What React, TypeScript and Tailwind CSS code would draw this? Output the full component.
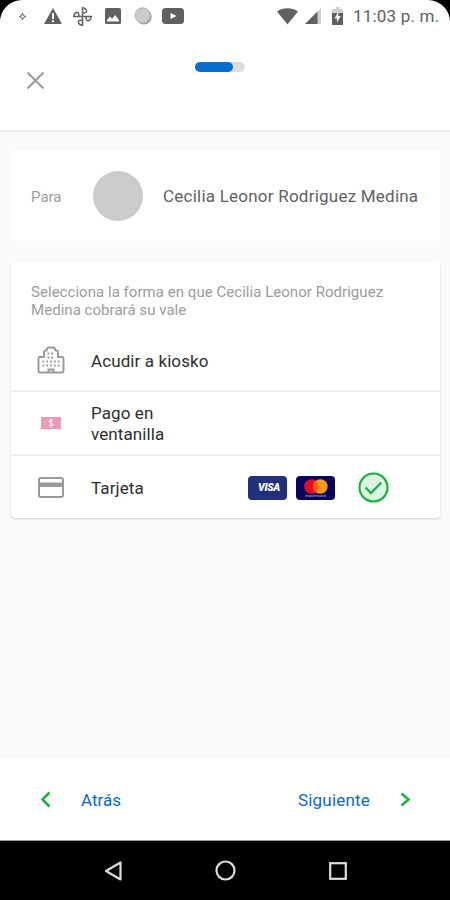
import type { ReactNode } from "react";

const StatusBar = () => (
  <div className="bg-black">
    <div className="flex h-8 items-center rounded-t-[22px] bg-white pl-[18px] text-[#616161]">
      <svg className="size-[9px]" viewBox="0 0 9 9" fill="none" stroke="currentColor" strokeWidth="1">
        <path d="M4.5 1 5.4 3.6 8 4.5 5.4 5.4 4.5 8 3.6 5.4 1 4.5 3.6 3.6Z" />
      </svg>
      <svg className="ml-[16px] h-[18px] w-[20px]" viewBox="0 0 20 18">
        <path d="M10 1 19 17H1Z" fill="currentColor" />
        <path d="M9 6h2v6H9zM9 13.2h2v2H9z" fill="#fff" />
      </svg>
      <svg className="ml-[9px] size-[21px]" viewBox="0 0 21 21" fill="none" stroke="currentColor" strokeWidth="1.5">
        <path d="M10.5 10.5V1.7C6.4 1.9 5.9 5.2 6.8 6.2 7.6 7 9 7 10.5 7" transform="matrix(-1 0 0 1 21 0)" />
        <path d="M10.5 10.5h8.8C19.1 14.6 15.8 15.1 14.8 14.2 14 13.4 14 12 14 10.5" />
        <path d="M10.5 10.5v8.8C6.4 19.1 5.9 15.8 6.8 14.8 7.6 14 9 14 10.5 14" />
        <path d="M10.5 10.5H1.7C1.9 6.4 5.2 5.9 6.2 6.8 7 7.6 7 9 7 10.5" />
      </svg>
      <svg className="ml-[12px] h-[16px] w-[16px]" viewBox="0 0 16 16">
        <rect width="16" height="16" rx="1.5" fill="currentColor" />
        <path d="M2 13.5V12l3-3.5 2 2.3L10.2 7 14 12v1.5Z" fill="#fff" />
      </svg>
      <svg className="ml-[13px] size-[18px]" viewBox="0 0 18 18">
        <circle cx="9.8" cy="9.8" r="7.8" fill="#9b9b9b" />
        <circle cx="8.6" cy="8.4" r="7.6" fill="#cbcbcb" stroke="#b5b5b5" strokeWidth="1" />
      </svg>
      <svg className="ml-[10px] h-[16px] w-[22px]" viewBox="0 0 22 16">
        <rect width="22" height="16" rx="3.5" fill="currentColor" />
        <path d="M8.5 5v6l6-3Z" fill="#fff" />
      </svg>
      <svg className="ml-[93px] h-[18px] w-[21px]" viewBox="0 0 21 18">
        <path d="M0 4.5C6 .2 15 .2 21 4.5L10.5 17.5Z" fill="currentColor" />
      </svg>
      <svg className="ml-[7px] size-[16px]" viewBox="0 0 16 16">
        <path d="M16 0v16H0Z" fill="#cfcfcf" />
        <path d="M12.5 3.5V16H0Z" fill="currentColor" />
      </svg>
      <svg className="ml-[11px] h-[18px] w-[11px]" viewBox="0 0 11 18">
        <path d="M3.5 0h4v2H11v5H0V2h3.5Z" fill="#cfcfcf" />
        <path d="M0 6h11v12H0Z" fill="currentColor" />
        <path d="M6.3 4.5 2.5 11.5H5v4L8.7 9H6.3Z" fill="#fff" />
      </svg>
      <span className="ml-[10px] pt-px text-[17px] leading-none tracking-[0.2px] whitespace-nowrap">11:03 p. m.</span>
    </div>
  </div>
);

const BuildingIcon = () => (
  <svg className="h-[28px] w-[28px]" viewBox="0 0 28 28" fill="none" stroke="#999" strokeWidth="1.9">
    <path d="M1.5 12.5Q1.5 11 3 11H7V6Q7 4.5 8.5 4.5H9.5Q10 1.500 12 1.500H16Q18 1.500 18.500 4.500H19.500Q21 4.500 21 6V11H25Q26.500 11 26.500 12.500V25Q26.500 26.500 25 26.500H3Q1.500 26.500 1.500 25Z" />
    <path d="M10.5 7.5h7.5M10.5 11.5h7.5M5.5 15.5h17.5M5.5 19.5h17.5" strokeDasharray="1.8 2" strokeWidth="1.8" />
    <path d="M11.5 26v-2.500h5V26" />
  </svg>
);

const CashIcon = () => (
  <svg className="h-[12px] w-[20px]" viewBox="0 0 20 12">
    <rect width="20" height="12" rx="0.5" fill="#ed9ab7" />
    <path
      d="M12 3.7C11.5 2.9 8.2 2.7 8.2 4.5S12 5.8 12 7.5 8.7 9.2 8 8.2M10 1.8v8.4"
      fill="none"
      stroke="#fff"
      strokeWidth="1"
    />
  </svg>
);

const CardIcon = () => (
  <svg className="h-[21px] w-[26px]" viewBox="0 0 26 21">
    <rect x="1" y="1" width="24" height="19" rx="2" fill="none" stroke="#999" strokeWidth="2" />
    <path d="M1 5.500h24v4.500H1z" fill="#999" />
  </svg>
);

const Visa = () => (
  <div className="flex h-6 w-[39px] items-center justify-center rounded-[4px] bg-[#20307c] pl-[3px]">
    <span className="text-[10.5px] font-black tracking-[-0.3px] text-white italic">VISA</span>
  </div>
);

const Mastercard = () => (
  <div className="flex h-6 w-[39px] flex-col items-center rounded-[4px] bg-[#0a0660] pt-[3px]">
    <svg className="h-[15px] w-[24px]" viewBox="0 0 24 15">
      <circle cx="7.5" cy="7.5" r="7.3" fill="#ea0a22" />
      <circle cx="16.3" cy="7.5" r="7.3" fill="#f79a1f" />
      <path d="M11.900 1.700a7.300 7.300 0 0 1 0 11.600 7.300 7.300 0 0 1 0-11.600Z" fill="#fb6011" />
    </svg>
    <span className="text-[4px] leading-[4px] text-[#b9b8d8]">mastercard</span>
  </div>
);

const CheckBadge = () => (
  <svg className="size-[31px]" viewBox="0 0 31 31" fill="none" stroke="#1cb142">
    <circle cx="15.5" cy="15.5" r="14" fill="#dcf4e2" strokeWidth="2.2" />
    <path d="M7.5 15.5 13 21 23.2 10.5" strokeWidth="2.3" />
  </svg>
);

type OptionProps = {
  icon: ReactNode;
  label: string;
  className: string;
  children?: ReactNode;
};

const Option = ({ icon, label, className, children }: OptionProps) => (
  <li className={`flex items-center pl-5 ${className}`}>
    <div className="flex w-[39px] shrink-0 justify-center">{icon}</div>
    <span className="ml-[21px] w-[130px] pt-[2px] text-[17px] leading-[21px] tracking-[0.1px] text-[#2e2e2e]">
      {label}
    </span>
    {children}
  </li>
);

const App = () => {
  return (
    <div className="flex h-[900px] w-[450px] flex-col overflow-hidden bg-[#fafafa] font-['Roboto',sans-serif]">
      <StatusBar />

      {/* Header */}
      <header className="flex h-[100px] shrink-0 border-b-2 border-[#ebebeb] bg-white">
        <svg className="mt-[39px] ml-[26px] size-[19px]" viewBox="0 0 19 19" stroke="#999" strokeWidth="1.9">
          <path d="M1.5 1.5 17.5 17.5M17.5 1.5 1.5 17.5" />
        </svg>
        <div className="mt-[30px] ml-[150px] h-[10px] w-[50px] rounded-full bg-[#dcdcdc]">
          <div className="h-full w-[38px] rounded-full bg-[#056fcd]" />
        </div>
      </header>

      <main className="flex grow flex-col gap-[21px] pt-[18px] pr-[10px] pl-[11px]">
        {/* Recipient */}
        <section className="flex h-[91px] items-center rounded-sm bg-white pl-5">
          <span className="w-[62px] pt-[3px] text-[15px] text-[#9c9c9c]">Para</span>
          <div className="size-[50px] rounded-full bg-[#cbcbcb]" />
          <span className="ml-5 pt-[2px] text-[17px] tracking-[0.23px] whitespace-nowrap text-[#616161]">
            Cecilia Leonor Rodriguez Medina
          </span>
        </section>

        {/* Payout methods */}
        <section className="h-[256px] rounded-sm bg-white shadow-[0_1px_2px_rgba(0,0,0,0.18)]">
          <p className="px-5 pt-[22px] text-[15px] leading-[17.5px] tracking-[0.04px] text-[#9c9c9c]">
            Selecciona la forma en que Cecilia Leonor Rodriguez
            <br />
            Medina cobrará su vale
          </p>
          <ul className="mt-[11px] divide-y-2 divide-[#f0f0f0]">
            <Option icon={<BuildingIcon />} label="Acudir a kiosko" className="h-[62px]" />
            <Option icon={<CashIcon />} label="Pago en ventanilla" className="h-[64px] pr-[250px]" />
            <Option icon={<CardIcon />} label="Tarjeta" className="h-[63px]">
              <div className="ml-[27px] flex items-center gap-[9px]">
                <Visa />
                <Mastercard />
              </div>
              <div className="ml-[23px]">
                <CheckBadge />
              </div>
            </Option>
          </ul>
        </section>
      </main>

      {/* Step navigation */}
      <footer className="flex h-[83px] shrink-0 items-center justify-between border-b border-[#999] bg-white pr-[39px] pl-[40px] text-[17px] text-[#0b6bc4]">
        <button className="flex items-center gap-[30px]">
          <svg className="h-[17px] w-[11px]" viewBox="0 0 11 17" fill="none" stroke="#1cb142" strokeWidth="2.600">
            <path d="M9.5 1.5 2.5 8.500l7 7" />
          </svg>
          <span className="pt-[3px]">Atrás</span>
        </button>
        <button className="flex items-center gap-[30px]">
          <span className="pt-[3px] tracking-[0.2px]">Siguiente</span>
          <svg className="h-[15px] w-[11px]" viewBox="0 0 11 15" fill="none" stroke="#1cb142" strokeWidth="2.600">
            <path d="M1.5 1.5 8.500 7.500l-7 6" />
          </svg>
        </button>
      </footer>

      {/* Android buttons */}
      <nav className="flex h-[59px] shrink-0 items-center bg-black pl-[103px]">
        <svg className="h-[22px] w-[20px]" viewBox="0 0 20 22" fill="none" stroke="#dedede" strokeWidth="2.200" strokeLinejoin="round">
          <path d="M17.5 2.5v17L3 11Z" />
        </svg>
        <svg className="ml-[92px] size-[21px]" viewBox="0 0 21 21" fill="none" stroke="#dedede" strokeWidth="2.200">
          <circle cx="10.5" cy="10.5" r="9" />
        </svg>
        <svg className="ml-[93px] size-[18px]" viewBox="0 0 18 18" fill="none" stroke="#dedede" strokeWidth="2.200">
          <rect x="1.200" y="1.200" width="15.600" height="15.600" />
        </svg>
      </nav>
    </div>
  );
};

export default App;
